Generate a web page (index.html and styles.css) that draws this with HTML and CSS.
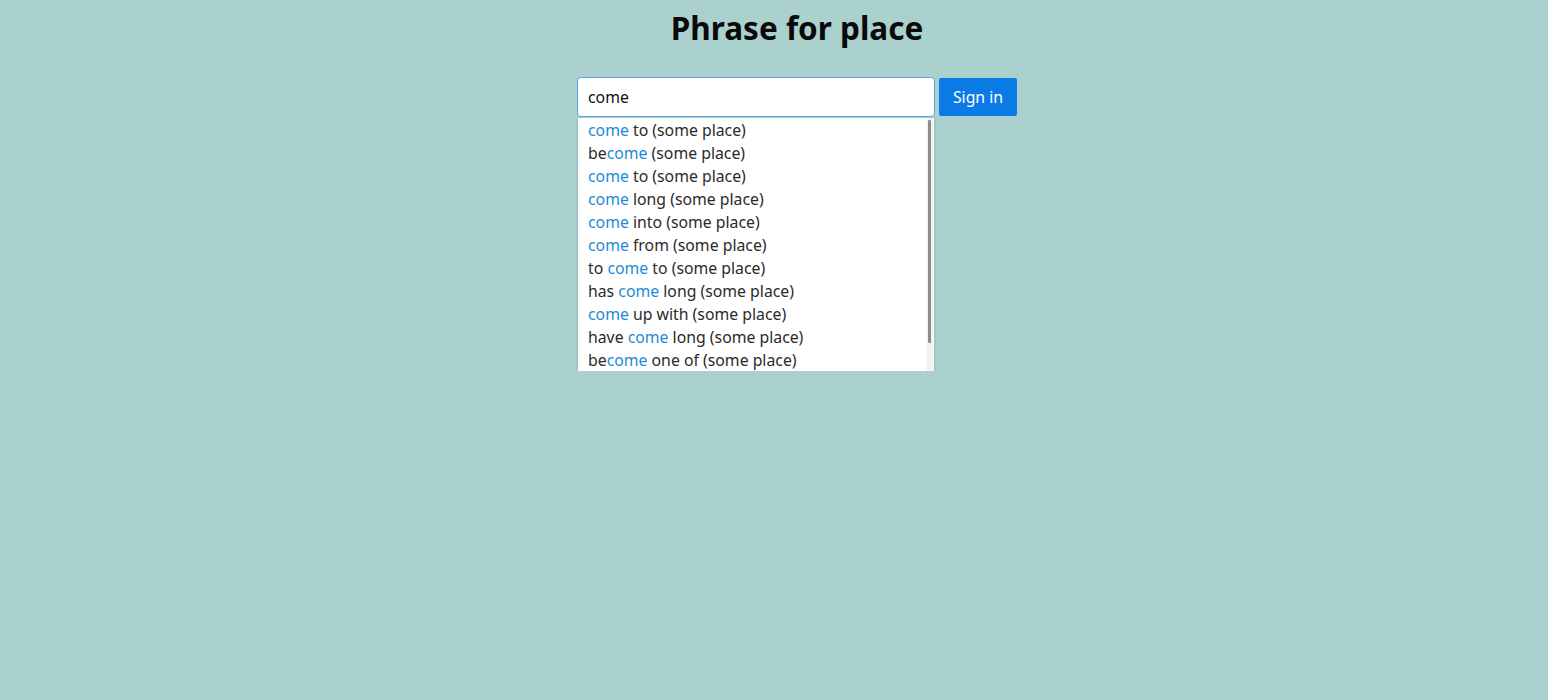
FILE: index.html
```html
<!DOCTYPE html>
<html>
<head>
<meta charset="utf-8">
<link rel="stylesheet" href="styles.css">
</head>
<body>
<h1 class="title">Phrase for place</h1>
<div class="search">
  <div class="field">
    <input class="input" type="text" value="come">
    <div class="suggest">
      <ul class="list">
        <li><span class="hl">come</span> to (some place)</li>
        <li>be<span class="hl">come</span> (some place)</li>
        <li><span class="hl">come</span> to (some place)</li>
        <li><span class="hl">come</span> long (some place)</li>
        <li><span class="hl">come</span> into (some place)</li>
        <li><span class="hl">come</span> from (some place)</li>
        <li>to <span class="hl">come</span> to (some place)</li>
        <li>has <span class="hl">come</span> long (some place)</li>
        <li><span class="hl">come</span> up with (some place)</li>
        <li>have <span class="hl">come</span> long (some place)</li>
        <li>be<span class="hl">come</span> one of (some place)</li>
      </ul>
      <div class="scrollbar"><div class="thumb"></div></div>
    </div>
  </div>
  <button class="btn">Sign in</button>
</div>
</body>
</html>
```

FILE: styles.css
```css
html, body {
  margin: 0;
  padding: 0;
  background: #abd1ce;
  font-family: "Noto Sans", "Open Sans", sans-serif;
}
.title {
  margin: 0;
  padding-top: 6px;
  padding-left: 46px;
  text-align: center;
  font-family: "Noto Sans", sans-serif;
  font-size: 31.5px;
  font-weight: 700;
  line-height: 44px;
  color: #0a0a0a;
}
.search {
  display: flex;
  justify-content: center;
  align-items: flex-start;
  gap: 4px;
  margin-top: 27px;
  padding-left: 46px;
}
.field {
  display: flex;
  flex-direction: column;
  width: 358px;
}
.input {
  display: block;
  box-sizing: border-box;
  width: 358px;
  height: 40px;
  margin: 0;
  padding: 0 10px;
  border: 1px solid #5aa9e6;
  border-radius: 4px;
  background: #fff;
  font-family: "Noto Sans", sans-serif;
  font-size: 15.8px;
  color: #111;
  outline: none;
}
.suggest {
  display: flex;
  width: 356px;
  height: 253px;
  margin: 1px 0 0 1px;
  background: #fff;
  overflow: hidden;
  box-shadow: 0 1px 3px rgba(0,0,0,0.22);
}
.list {
  flex: 1;
  margin: 0;
  padding: 1px 0 0 0;
  list-style: none;
}
.list li {
  height: 23px;
  line-height: 23px;
  padding-left: 10px;
  font-size: 15.8px;
  color: #2a2a2a;
  white-space: nowrap;
}
.hl {
  color: #1f8ad6;
}
.scrollbar {
  width: 6px;
  margin-right: 1px;
  background: #f1f1f1;
  padding: 2px 2px 0 1px;
  box-sizing: border-box;
}
.thumb {
  height: 223px;
  background: #8c8c8c;
  border-radius: 1px;
}
.btn {
  width: 78px;
  height: 38px;
  margin-top: 1px;
  padding: 0;
  border: none;
  border-radius: 2px;
  background: #0a7ae6;
  color: #fff;
  font-family: "Noto Sans", sans-serif;
  font-size: 15.8px;
}
```
